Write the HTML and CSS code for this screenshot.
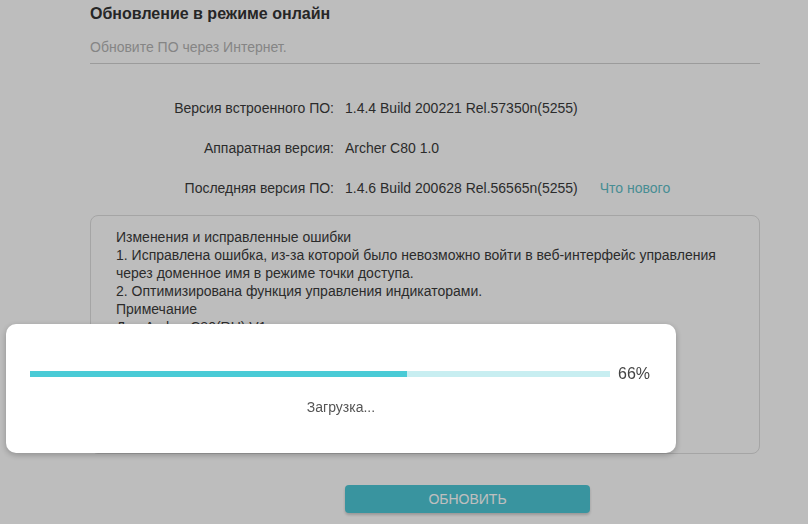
FILE: index.html
```html
<!DOCTYPE html>
<html lang="ru">
<head>
<meta charset="utf-8">
<title>Обновление в режиме онлайн</title>
<link rel="stylesheet" href="styles.css">
</head>
<body>
<div class="page">
  <h1 class="title">Обновление в режиме онлайн</h1>
  <p class="subtitle">Обновите ПО через Интернет.</p>
  <div class="rows">
    <div class="row"><span class="label">Версия встроенного ПО:</span><span class="value">1.4.4 Build 200221 Rel.57350n(5255)</span></div>
    <div class="row"><span class="label">Аппаратная версия:</span><span class="value">Archer C80 1.0</span></div>
    <div class="row"><span class="label">Последняя версия ПО:</span><span class="value">1.4.6 Build 200628 Rel.56565n(5255)</span><a class="link" href="#">Что нового</a></div>
  </div>
  <div class="notes">
    <p>Изменения и исправленные ошибки</p>
    <p>1. Исправлена ошибка, из-за которой было невозможно войти в веб-интерфейс управления через доменное имя в режиме точки доступа.</p>
    <p>2. Оптимизирована функция управления индикаторами.</p>
    <p>Примечание</p>
    <p>Для Archer C80(RU) V1</p>
    <p>Обновление может занять несколько минут.</p>
    <p>Не выключайте устройство во время обновления.</p>
  </div>
  <div class="actions">
    <button class="btn">ОБНОВИТЬ</button>
  </div>
</div>
<div class="overlay"></div>
<div class="modal">
  <div class="progress-row">
    <div class="track"><div class="fill" style="width:65%"></div></div>
    <span class="pct">66%</span>
  </div>
  <p class="loading">Загрузка...</p>
</div>
</body>
</html>
```
FILE: styles.css
```css
html, body {
  margin: 0;
  padding: 0;
  background: #fdfdfd;
  font-family: "Liberation Sans", Arial, sans-serif;
  color: #333;
  overflow: hidden;
  height: 524px;
}
.page {
  margin-left: 90px;
  width: 670px;
}
.title {
  margin: 4px 0 0;
  font-size: 16px;
  line-height: 20px;
  font-weight: bold;
  color: #333;
}
.subtitle {
  margin: 13px 0 0;
  font-size: 14px;
  line-height: 20px;
  color: #b2b2b2;
  padding-bottom: 6px;
  border-bottom: 1px solid #cfcfcf;
}
.rows {
  margin-top: 34px;
  display: flex;
  flex-direction: column;
  gap: 20px;
}
.row {
  display: flex;
  align-items: center;
  font-size: 14px;
  line-height: 20px;
  color: #3a3a3a;
}
.label {
  width: 244px;
  text-align: right;
  flex: none;
}
.value {
  margin-left: 11px;
}
.link {
  margin-left: 22px;
  color: #5fbcc5;
  text-decoration: none;
  font-size: 14px;
}
.notes {
  margin-top: 17px;
  border: 1px solid #dcdcdc;
  border-radius: 8px;
  padding: 12px 24px 0 25px;
  box-sizing: border-box;
  height: 239px;
  overflow: hidden;
  font-size: 14px;
  line-height: 18px;
  color: #3a3a3a;
}
.notes p {
  margin: 0;
}
.actions {
  margin-top: 31px;
  padding-left: 255px;
}
.btn {
  width: 245px;
  height: 28px;
  border: none;
  border-radius: 4px;
  background: #4dc6d4;
  color: #fff;
  font-family: "Liberation Sans", Arial, sans-serif;
  font-size: 14px;
  box-shadow: 0 2px 3px rgba(0, 0, 0, 0.2);
  padding: 0;
}
.overlay {
  position: fixed;
  inset: 0;
  background: rgba(0, 0, 0, 0.25);
}
.modal {
  position: fixed;
  left: 6px;
  top: 324px;
  width: 670px;
  height: 129px;
  box-sizing: border-box;
  background: #fff;
  border-radius: 10px;
  box-shadow: 0 2px 6px rgba(0, 0, 0, 0.25);
  padding: 40px 24px 0;
}
.progress-row {
  display: flex;
  align-items: center;
  height: 20px;
}
.track {
  width: 580px;
  height: 6px;
  background: #c8eef1;
  flex: none;
}
.fill {
  height: 100%;
  background: #4acbd6;
}
.pct {
  margin-left: 8px;
  font-size: 16px;
  color: #444;
}
.loading {
  margin: 14px 0 0;
  text-align: center;
  font-size: 14px;
  line-height: 18px;
  color: #555;
}
```
